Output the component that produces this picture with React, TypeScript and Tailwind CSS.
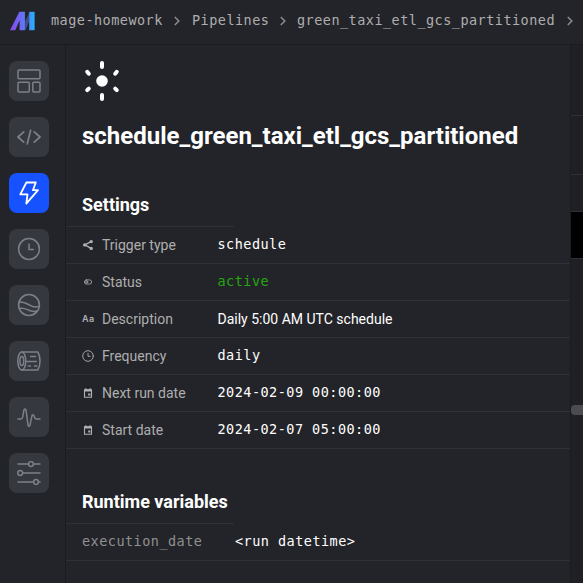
import React from 'react';

const MONO = "font-['DejaVu_Sans_Mono',monospace] text-[13.5px] tracking-[0.473px] whitespace-pre";

function Glyph({ children, size = 24 }: { children: React.ReactNode; size?: number }) {
  return (
    <svg width={size} height={size} viewBox={`0 0 ${size} ${size}`} fill="none" stroke="currentColor" strokeWidth="1.5" strokeLinecap="round" strokeLinejoin="round">
      {children}
    </svg>
  );
}

const navItems: { name: string; active?: boolean; icon: React.ReactNode }[] = [
  {
    name: 'Overview',
    icon: (
      <>
        <rect x="1" y="1" width="22" height="8.7" rx="1" />
        <rect x="1" y="13.2" width="11.3" height="9.8" rx="1" />
        <rect x="15.8" y="13.2" width="7.2" height="9.8" rx="1" />
      </>
    ),
  },
  {
    name: 'Pipelines',
    icon: <path strokeWidth="1.7" d="M6.8 6.8 1 12l5.800 5.200M17.200 6.800 23 12l-5.800 5.200M13.600 5.300l-3.300 13.500" />,
  },
  {
    name: 'Triggers',
    active: true,
    icon: <path strokeWidth="1.8" d="M9.400 1.500h9.400L15.900 9.200H21L9.300 22.600l1.200-9.300H3.300Z" />,
  },
  {
    name: 'Runs',
    icon: (
      <>
        <circle cx="12" cy="12" r="10.4" />
        <path d="M12 7v5.600h4.300" />
      </>
    ),
  },
  {
    name: 'Backfills',
    icon: (
      <>
        <circle cx="12" cy="12" r="10.4" />
        <path d="M2.1 9.1c4-.9 6.8.8 10 2.7 3.5 2.1 6.6 3 10.1 1.5M2.2 15.500c4-1 6 .1 8.800 1.400 2.900 1.500 5.400 2 8.600 1.200" />
      </>
    ),
  },
  {
    name: 'Logs',
    icon: (
      <>
        <ellipse cx="4.8" cy="12" rx="4" ry="9" />
        <ellipse cx="4.8" cy="12" rx="1.9" ry="4.5" />
        <path d="M4.8 3h16c1.1 1.8 2.2 5.4 2.2 9s-1 7.200-2.200 9h-16M13.500 7.500h5M9.800 12.400h9.500M11.200 17h2.300M17.500 17h2.400" />
      </>
    ),
  },
  {
    name: 'Monitor',
    icon: <path d="M.9 14h2.800c1.200 0 1.700-.4 2-1.800l1.200-7c.3-1.600 1.800-1.600 2.100 0l2 15c.2 1.500 1.700 1.500 2 0l1.900-9.300c.3-1.500 1.700-1.500 2.200 0l.6 1.900c.3.900.7 1.200 1.700 1.200H23" />,
  },
  {
    name: 'Settings',
    icon: (
      <>
        <path d="M1 3h10.300M16.500 3H23M5.800 12H23M1 21h15.500M21.500 21H23" />
        <circle cx="14" cy="3" r="2.400" />
        <circle cx="3.200" cy="12" r="2.400" />
        <circle cx="19" cy="21" r="2.400" />
      </>
    ),
  },
];

function ShareIcon() {
  return (
    <Glyph size={12}>
      <path d="m9.200 2.600-6.500 3.300 6.500 3.500" strokeWidth="1.200" />
      <g fill="currentColor" stroke="none">
        <circle cx="9.200" cy="2.600" r="1.700" />
        <circle cx="2.700" cy="5.900" r="1.700" />
        <circle cx="9.200" cy="9.400" r="1.700" />
      </g>
    </Glyph>
  );
}

function ToggleIcon() {
  return (
    <Glyph size={12}>
      <rect x="2.400" y="3.900" width="7.200" height="4.200" rx="2.100" strokeWidth="0.800" />
      <circle cx="4.700" cy="6" r="1.100" strokeWidth="0.800" />
    </Glyph>
  );
}

function ClockIcon() {
  return (
    <Glyph size={12}>
      <circle cx="6" cy="6" r="5.300" strokeWidth="0.900" />
      <path d="M6 3.300v3h2.200" strokeWidth="0.900" />
    </Glyph>
  );
}

function CalendarIcon() {
  return (
    <Glyph size={12}>
      <path d="M2.500 2.700h7v7.600h-7Z" strokeWidth="1.100" strokeLinejoin="miter" />
      <path d="M2.500 2.200h7v2.300h-7ZM6.200 6.400h2.200v2.200H6.200Z" fill="currentColor" stroke="none" />
      <path d="M3.900 1.500v1M8.100 1.500v1" strokeWidth="1" />
    </Glyph>
  );
}

const settings = [
  { icon: <ShareIcon />, label: 'Trigger type', value: 'schedule' },
  { icon: <ToggleIcon />, label: 'Status', value: 'active', green: true },
  { icon: <span className="font-[Inter,sans-serif] text-[9px] font-semibold tracking-[0.4px]">Aa</span>, label: 'Description', value: 'Daily 5:00 AM UTC schedule', sans: true },
  { icon: <ClockIcon />, label: 'Frequency', value: 'daily' },
  { icon: <CalendarIcon />, label: 'Next run date', value: '2024-02-09 00:00:00' },
  { icon: <CalendarIcon />, label: 'Start date', value: '2024-02-07 05:00:00' },
];

function Chevron() {
  return (
    <svg width="6" height="10" viewBox="0 0 6 10" fill="none" stroke="#8b8d91" strokeWidth="1.500">
      <path d="m.8 1 4 4-4 4" />
    </svg>
  );
}

function Logo() {
  return (
    <svg width="25" height="20" viewBox="0 0 25 20">
      <defs>
        <linearGradient id="mage" x1="0" x2="25" y1="0" y2="0" gradientUnits="userSpaceOnUse">
          <stop stopColor="#8b45ef" />
          <stop offset=".5" stopColor="#6771f5" />
          <stop offset="1" stopColor="#22b3ff" />
        </linearGradient>
      </defs>
      <path d="m14.900 10.500 4.300-8.500v8.500l-3.500 8.200h-.8Z" fill="#3c4f88" />
      <path d="M0 19.200 9.400.8h5.500v18.400H9.600V9.300L5.200 19.200Z" fill="url(#mage)" />
      <path d="M19.200.8h5.400v18.400h-5.400Z" fill="url(#mage)" />
    </svg>
  );
}

function SunIcon() {
  return (
    <svg width="40" height="40" viewBox="0 0 40 40" fill="#fff" stroke="#fff" strokeWidth="4" strokeLinecap="round">
      <circle cx="20" cy="20" r="5.800" stroke="none" />
      <path d="M20 2v4M20 34v4M5.200 10.800l1.600 1.900M34.800 10.800l-1.600 1.900M5.200 29.200l1.600-1.600M34.800 29.200l-1.600-1.600" />
    </svg>
  );
}

export default function App() {
  return (
    <div className="flex h-[583px] w-[583px] flex-col overflow-hidden bg-[#232429] font-[Roboto,sans-serif] text-white">
      <header className="flex h-[45px] shrink-0 items-center border-b border-[#1b1c20] pb-[3px] pl-[10px]">
        <Logo />
        <nav className={`${MONO} flex items-center pl-4 text-[#aeaeae]`}>
          <span className="w-[112px]">mage-homework</span>
          <span className="ml-[11px] mr-[12px]"><Chevron /></span>
          <span className="w-[77px]">Pipelines</span>
          <span className="ml-[11px] mr-[11px]"><Chevron /></span>
          <span className="w-[258px]">green_taxi_etl_gcs_partitioned</span>
          <span className="ml-[12px]"><Chevron /></span>
        </nav>
      </header>
      <div className="flex min-h-0 flex-1">
        <aside className="flex w-[66px] shrink-0 flex-col gap-4 border-r border-[#1b1c20] pl-[9px] pt-4">
          {navItems.map((item) => (
            <button
              key={item.name}
              aria-label={item.name}
              className={`flex size-10 shrink-0 items-center justify-center rounded-lg ${item.active ? 'bg-[#1752ff] text-white' : 'bg-[#363840] text-[#7d8088]'}`}
            >
              <Glyph>{item.icon}</Glyph>
            </button>
          ))}
        </aside>
        <main className="flex w-[505px] shrink-0 flex-col border-r border-[#1b1c20]">
          <div className="pl-4 pt-4"><SunIcon /></div>
          <h1 className="mt-[19px] pl-4 text-[24px] font-bold leading-8">schedule_green_taxi_etl_gcs_partitioned</h1>
          <h2 className="mt-[40px] pl-4 text-[18px] font-bold leading-[26px]">Settings</h2>
          <div className="mt-2 h-px w-[168px] bg-[#2e3036]" />
          {settings.map((row) => (
            <div key={row.label} className="flex h-[37px] shrink-0 items-center border-b border-[#2e3036] pl-4">
              <span className="flex w-5 items-center text-[#aeb0b4]">{row.icon}</span>
              <span className="w-[115.5px] text-[14px] text-[#aeaeae]">{row.label}</span>
              <span className={row.sans ? 'text-[14px]' : `${MONO} pb-0.5 ${row.green ? 'text-[#23a80c]' : ''}`}>{row.value}</span>
            </div>
          ))}
          <h2 className="mt-[40px] pl-4 text-[18px] font-bold leading-[26px]">Runtime variables</h2>
          <div className="mt-2 h-px w-[168px] bg-[#2e3036]" />
          <div className={`${MONO} flex h-[37px] shrink-0 items-center border-b border-[#2e3036] pb-0.5 pl-4`}>
            <span className="w-[153px] text-[#8f918f]">execution_date</span>
            <span>{'<run datetime>'}</span>
          </div>
        </main>
        <section className="flex flex-1 flex-col bg-[#1f2024]">
          <div className="h-[71px] border-b border-[#303136]" />
          <div className="h-[59px] border-b border-[#303136]" />
          <div className="h-[37px] border-b border-[#303136]" />
          <div className="h-[47px] border-b border-[#303136] bg-black" />
          <div className="mt-[146px] h-[10px] rounded-l bg-[#4b4c50]" />
        </section>
      </div>
    </div>
  );
}
